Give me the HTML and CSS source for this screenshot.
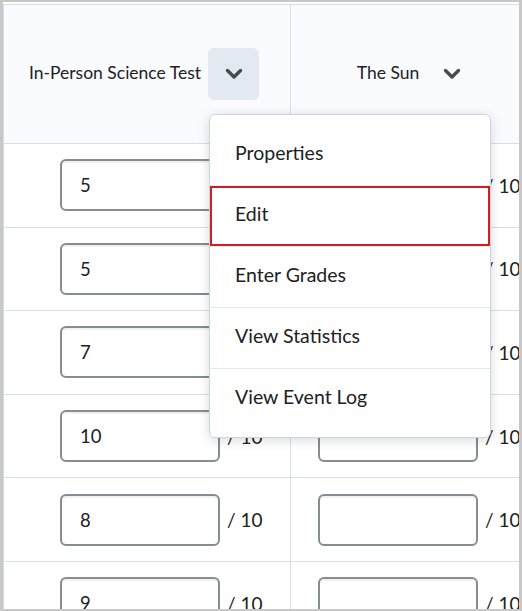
FILE: index.html
```html
<!DOCTYPE html>
<html lang="en">
<head>
  <meta charset="UTF-8" />
  <meta name="viewport" content="width=device-width, initial-scale=1" />
  <title>Grades - Enter Grades</title>
  <link rel="stylesheet" href="styles.css">
</head>
<body>

  <div class="frame">
    <div class="grades">
      <div class="cell head">
        <span>In-Person Science Test</span>
        <button class="menu-btn open" title="Actions for In-Person Science Test">
          <svg width="18" height="12" viewBox="0 0 18 12"><path d="M2.5 2.5 L9 9 L15.5 2.5" /></svg>
        </button>
      </div>
      <div class="cell head">
        <span>The Sun</span>
        <button class="menu-btn" title="Actions for The Sun">
          <svg width="18" height="12" viewBox="0 0 18 12"><path d="M2.5 2.5 L9 9 L15.5 2.5" /></svg>
        </button>
      </div>

      <div class="cell first"><input class="grade" type="text" value="5"><span class="out-of">/ 10</span></div>
      <div class="cell second"><input class="grade" type="text" value=""><span class="out-of">/ 10</span></div>

      <div class="cell first"><input class="grade" type="text" value="5"><span class="out-of">/ 10</span></div>
      <div class="cell second"><input class="grade" type="text" value=""><span class="out-of">/ 10</span></div>

      <div class="cell first"><input class="grade" type="text" value="7"><span class="out-of">/ 10</span></div>
      <div class="cell second"><input class="grade" type="text" value=""><span class="out-of">/ 10</span></div>

      <div class="cell first"><input class="grade" type="text" value="10"><span class="out-of">/ 10</span></div>
      <div class="cell second"><input class="grade" type="text" value=""><span class="out-of">/ 10</span></div>

      <div class="cell first"><input class="grade" type="text" value="8"><span class="out-of">/ 10</span></div>
      <div class="cell second"><input class="grade" type="text" value=""><span class="out-of">/ 10</span></div>

      <div class="cell first"><input class="grade" type="text" value="9"><span class="out-of">/ 10</span></div>
      <div class="cell second"><input class="grade" type="text" value=""><span class="out-of">/ 10</span></div>
    </div>

    <ul class="dropdown">
      <li>Properties</li>
      <li class="focused">Edit</li>
      <li>Enter Grades</li>
      <li>View Statistics</li>
      <li>View Event Log</li>
    </ul>
  </div>

</body>
</html>
```

FILE: styles.css
```css
:root {
  --text-color: #202122;
  --line-color: #d8dee6;
  --head-bg: #f9fbff;
  --btn-bg: #e3e9f1;
  --icon-color: #494c4e;
  --input-border: #868c8f;
  --focus-red: #cd2026;
}

* {
  box-sizing: border-box;
}

body {
  margin: 0;
  font-family: Lato, "Open Sans", Arial, sans-serif;
  color: var(--text-color);
  background-color: #ffffff;
}

.frame {
  position: relative;
  width: 522px;
  height: 611px;
  overflow: hidden;
  border: 2px solid #c8c8c8;
  border-left-width: 3px;
  border-right-width: 3px;
  padding-top: 2px;
  background-color: #ffffff;
}

.grades {
  display: grid;
  grid-template-columns: 287px 255px;
  grid-template-rows: 139px;
  grid-auto-rows: 83.6px;
  width: 543px;
  border-top: 1px solid var(--line-color);
  border-left: 1px solid var(--line-color);
}

.cell {
  display: flex;
  align-items: center;
  border-right: 1px solid var(--line-color);
  border-bottom: 1px solid var(--line-color);
}

.head {
  justify-content: center;
  gap: 7px;
  padding-bottom: 4px;
  padding-right: 6px;
  font-size: 17.5px;
  background-color: var(--head-bg);
}

.head:nth-child(2) {
  padding-right: 2px;
}

.first {
  padding-left: 56px;
}

.second {
  padding-left: 27px;
}

.menu-btn {
  display: flex;
  align-items: center;
  justify-content: center;
  width: 51px;
  height: 52px;
  padding: 0;
  margin-top: 4px;
  border: none;
  border-radius: 6px;
  background: none;
  cursor: pointer;
}

.menu-btn.open {
  background-color: var(--btn-bg);
}

.menu-btn svg path {
  fill: none;
  stroke: var(--icon-color);
  stroke-width: 3.4;
  stroke-linecap: round;
  stroke-linejoin: round;
}

.grade {
  width: 160px;
  height: 52px;
  padding: 0 0 0 18px;
  border: 2px solid var(--input-border);
  border-radius: 6px;
  box-shadow: inset 0 2px 0 0 rgba(177, 185, 190, 0.2);
  font-family: inherit;
  font-size: 18.5px;
  color: var(--text-color);
  background-color: #ffffff;
}

.out-of {
  margin-left: 7px;
  font-size: 19px;
  white-space: nowrap;
}

.dropdown {
  position: absolute;
  left: 206px;
  top: 112px;
  width: 282px;
  margin: 0;
  padding: 10px 0 8px;
  list-style: none;
  background-color: #ffffff;
  border: 1px solid #cdd5dc;
  border-radius: 6px;
  box-shadow: 0 2px 12px rgba(0, 0, 0, 0.15);
}

.dropdown li {
  display: flex;
  align-items: center;
  height: 61px;
  padding-left: 25px;
  padding-bottom: 5px;
  font-size: 19.5px;
  border-top: 1px solid #e3e9ef;
}

.dropdown li:first-child {
  height: 60px;
  border-top: none;
}

.dropdown li.focused {
  box-shadow: inset 0 0 0 2px var(--focus-red);
}
```
